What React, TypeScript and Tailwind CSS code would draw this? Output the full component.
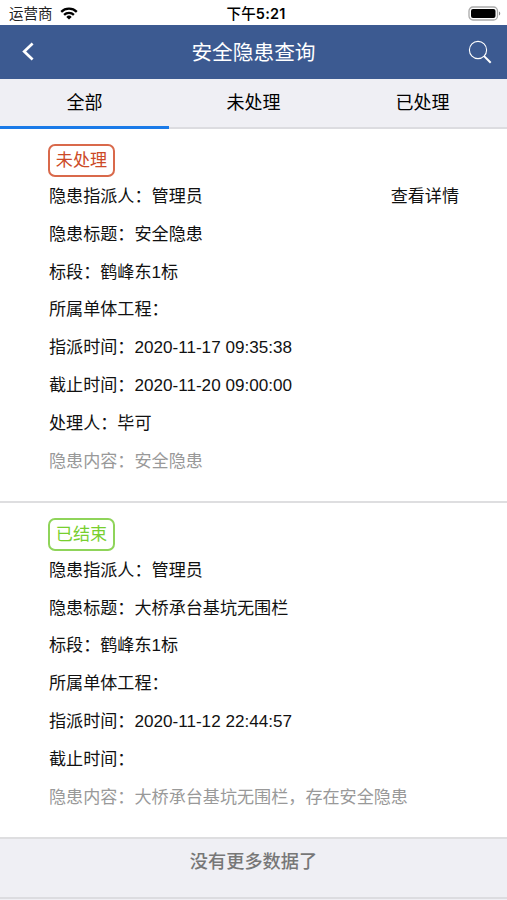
interface Hazard {
    id: number;
    status: string;
    done: boolean;
    fields: string[];
    content: string;
}

const tabs = ["全部", "未处理", "已处理"];

const hazards: Hazard[] = [
    {
        id: 1,
        status: "未处理",
        done: false,
        fields: [
            "隐患指派人：管理员",
            "隐患标题：安全隐患",
            "标段：鹤峰东1标",
            "所属单体工程：",
            "指派时间：2020-11-17 09:35:38",
            "截止时间：2020-11-20 09:00:00",
            "处理人：毕可",
        ],
        content: "安全隐患",
    },
    {
        id: 2,
        status: "已结束",
        done: true,
        fields: [
            "隐患指派人：管理员",
            "隐患标题：大桥承台基坑无围栏",
            "标段：鹤峰东1标",
            "所属单体工程：",
            "指派时间：2020-11-12 22:44:57",
            "截止时间：",
        ],
        content: "大桥承台基坑无围栏，存在安全隐患",
    },
];

function StatusBar() {
    return (
        <div className="grid h-[25px] grid-cols-3 items-center bg-white pl-[9px] pr-[6px] pt-[2px]">
            <div className="flex items-center gap-[7px]">
                <span className="text-[14.5px] leading-5 text-[#222]">运营商</span>
                <svg width="18" height="13" viewBox="0 0 18 13" fill="none" stroke="#000" strokeWidth="2.3">
                    <path d="M1.2 4.8a11.2 11.2 0 0 1 15.6 0" />
                    <path d="M4.1 7.9a7 7 0 0 1 9.8 0" />
                    <path d="M9 12.5 6.3 9.9a3.8 3.8 0 0 1 5.4 0Z" fill="#000" stroke="none" />
                </svg>
            </div>
            <span className="pl-[2px] text-center font-['Inter','Noto_Sans_CJK_SC',sans-serif] text-[14.5px] leading-5 font-medium tracking-[0.2px] whitespace-nowrap">
                下午<span className="font-semibold">5:21</span>
            </span>
            <svg className="justify-self-end" width="33" height="15" viewBox="0 0 33 15">
                <rect x="1" y="1" width="28.5" height="13" rx="4" fill="#fff" stroke="#aaa" strokeWidth="1.3" />
                <rect x="3" y="3" width="24.5" height="9" rx="2" fill="#000" />
                <path d="M31 5.5v4c1.7-.6 1.7-3.4 0-4Z" fill="#888" />
            </svg>
        </div>
    );
}

function Header() {
    return (
        <header className="flex h-[54px] items-center justify-between bg-[#3c5a91] pl-[22px] pr-[15px] text-white">
            <svg width="17" height="20" viewBox="0 0 17 20" fill="none" stroke="currentColor" strokeWidth="2.7">
                <path d="M10.6 1.6 2.2 9.6l8.4 8" />
            </svg>
            <h1 className="pt-[2px] text-[20.7px] leading-7">安全隐患查询</h1>
            <svg width="24" height="24" viewBox="0 0 24 24" fill="none" stroke="currentColor">
                <circle cx="10" cy="10" r="8.6" strokeWidth="1.1" />
                <path d="m16.1 16.1 6.6 6.7" strokeWidth="2" />
            </svg>
        </header>
    );
}

function HazardCard({ hazard }: { hazard: Hazard }) {
    return (
        <section className="border-b-2 border-[#dedee0] bg-white pt-[15px] pr-[48px] pb-[21px] pl-[49px]">
            <span
                className={`-ml-px flex h-[33px] w-[67px] items-center justify-center rounded-[7px] border-2 pt-px text-[17.1px] leading-6 ${
                    hazard.done ? "border-[#8fd45a] text-[#78cf2e]" : "border-[#d9694b] text-[#cc4a26]"
                }`}
            >
                {hazard.status}
            </span>
            {hazard.fields.map((field, i) => (
                <div key={field} className="flex h-[37.85px] items-center justify-between pt-[2px]">
                    <span>{field}</span>
                    {!hazard.done && i === 0 && <a>查看详情</a>}
                </div>
            ))}
            <p className="flex h-[37.85px] items-center pt-[2px] text-[#999]">隐患内容：{hazard.content}</p>
        </section>
    );
}

export default function App() {
    return (
        <div className="flex h-[900px] flex-col overflow-hidden bg-[#efeff4] font-['Liberation_Sans','Noto_Sans_CJK_SC',sans-serif] text-black" lang="zh-CN">
            <StatusBar />
            <Header />
            <nav className="grid h-[50px] shrink-0 grid-cols-3 bg-[#efeff4]">
                {tabs.map((tab, i) => (
                    <button
                        key={tab}
                        className={`text-[18px] leading-6 ${i === 0 ? "border-b-3 border-[#1a7ae8] pt-px" : "border-b-2 border-[#dcdce0]"}`}
                    >
                        {tab}
                    </button>
                ))}
            </nav>
            <main className="text-[17.1px] leading-6 text-[#111]">
                {hazards.map((hazard) => (
                    <HazardCard key={hazard.id} hazard={hazard} />
                ))}
            </main>
            <footer className="h-[60px] shrink-0 border-b-2 border-[#dcdce0] pt-[9px] text-center text-[18.2px] leading-7 font-medium text-[#777]">
                没有更多数据了
            </footer>
        </div>
    );
}
